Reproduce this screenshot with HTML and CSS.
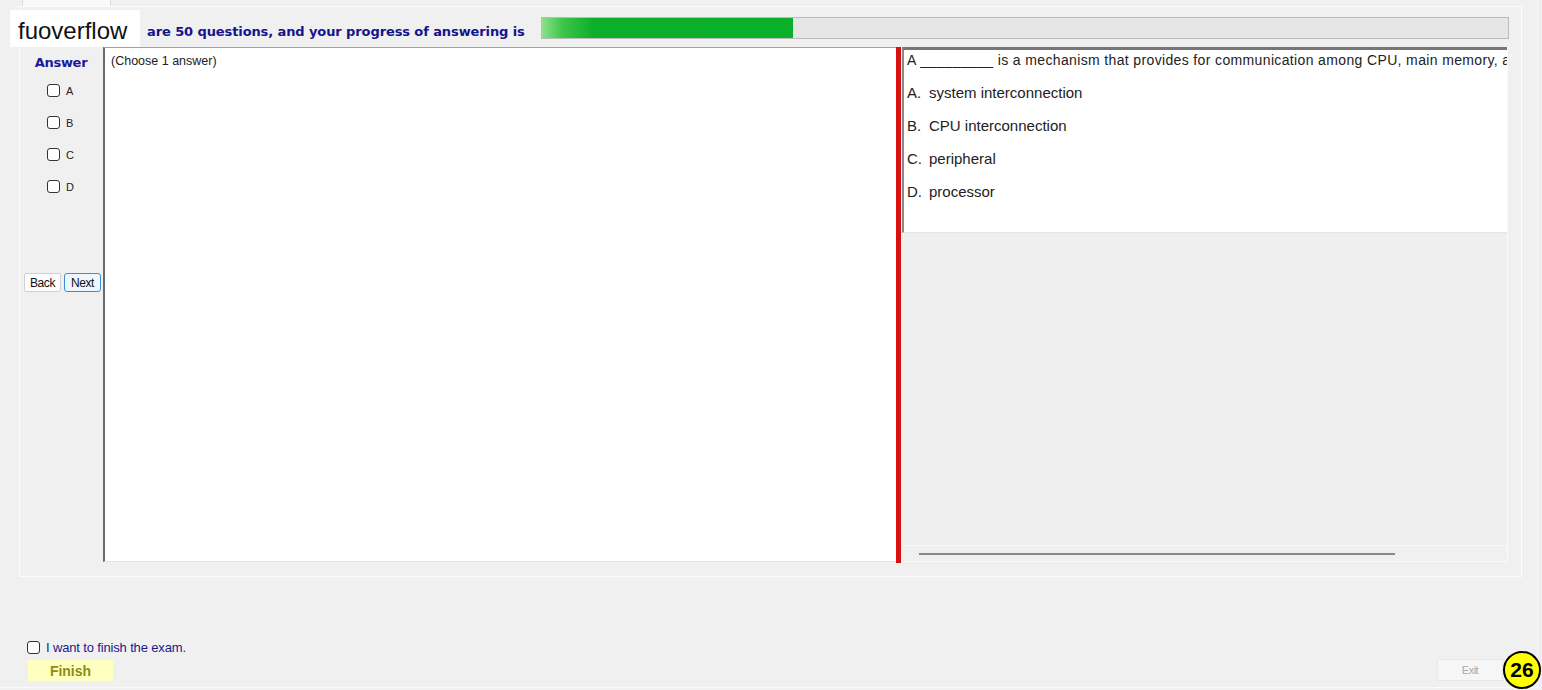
FILE: index.html
```html
<!DOCTYPE html>
<html lang="en">
<head>
    <meta charset="UTF-8">
    <title>Exam</title>
    <link rel="stylesheet" href="styles.css">
</head>
<body>
    <div class="app">
        <div class="tabs"><div class="tab"></div></div>

        <div class="group">
            <div class="header">
                <div class="progress-label">are 50 questions, and your progress of answering is</div>
                <div class="progress"><div class="progress-fill" style="width: 26%"></div></div>
            </div>

            <div class="main">
                <div class="answer-col">
                    <div class="answer-title">Answer</div>
                    <div class="choices">
                        <label class="choice"><input type="checkbox"> A</label>
                        <label class="choice"><input type="checkbox"> B</label>
                        <label class="choice"><input type="checkbox"> C</label>
                        <label class="choice"><input type="checkbox"> D</label>
                    </div>
                    <div class="nav-buttons">
                        <button class="btn">Back</button>
                        <button class="btn btn-next">Next</button>
                    </div>
                </div>

                <div class="work-panel">(Choose 1 answer)</div>

                <div class="splitter"></div>

                <div class="question-panel">
                    <div class="question-box">
                        <p class="question">A _________ is a mechanism that provides for communication among CPU, main memory, and I/O modules.</p>
                        <p class="option"><span class="opt-key">A.</span>system interconnection</p>
                        <p class="option"><span class="opt-key">B.</span>CPU interconnection</p>
                        <p class="option"><span class="opt-key">C.</span>peripheral</p>
                        <p class="option"><span class="opt-key">D.</span>processor</p>
                    </div>
                    <div class="question-rest"></div>
                    <div class="hscroll"><div class="hscroll-thumb"></div></div>
                </div>
            </div>
        </div>

        <div class="footer">
            <div class="finish-block">
                <label class="finish-check"><input type="checkbox"> I want to finish the exam.</label>
                <button class="btn-finish">Finish</button>
            </div>
            <button class="btn-exit">Exit</button>
        </div>
    </div>

    <div class="watermark">fuoverflow</div>
    <div class="badge">26</div>
</body>
</html>
```

FILE: styles.css
```css
body {
    margin: 0;
    padding: 0;
    background-color: #f0f0f0;
    font-family: "Liberation Sans", Arial, sans-serif;
    color: #222;
}

.app {
    width: 1537px;
    height: 687px;
    border-right: 1px solid #fafafa;
    border-bottom: 1px solid #fafafa;
    position: relative;
}

.tabs {
    height: 6px;
    padding-left: 22px;
}

.tab {
    width: 87px;
    height: 6px;
    background-color: #f9f9f9;
    border-left: 1px solid #dcdcdc;
    border-right: 1px solid #dcdcdc;
}

.group {
    margin-left: 19px;
    width: 1501px;
    height: 569px;
    border: 1px solid #fbfbfb;
}

.header {
    height: 40px;
    display: flex;
    align-items: flex-start;
    padding-left: 127px;
}

.progress-label {
    margin-top: 17px;
    line-height: 16px;
    font-family: "DejaVu Sans", Verdana, sans-serif;
    font-size: 13px;
    font-weight: bold;
    letter-spacing: -0.1px;
    color: #14148c;
}

.progress {
    margin-left: auto;
    margin-right: 12px;
    margin-top: 10px;
    width: 966px;
    height: 20px;
    background-color: #e6e6e6;
    border: 1px solid #bcbcbc;
}

.progress-fill {
    height: 100%;
    background: linear-gradient(to right, #8ee08e 0%, #3ec64a 8%, #0db02b 20%, #0bb02a 100%);
}

.main {
    height: 515px;
    display: flex;
    padding-left: 4px;
}

.answer-col {
    width: 79px;
    display: flex;
    flex-direction: column;
}

.answer-title {
    margin-top: 8px;
    line-height: 16px;
    font-family: "DejaVu Sans", Verdana, sans-serif;
    font-size: 13px;
    font-weight: bold;
    letter-spacing: -0.3px;
    color: #1a1aa0;
    text-align: center;
    padding-right: 5px;
}

.choices {
    margin-top: 13px;
    padding-left: 23px;
    display: flex;
    flex-direction: column;
    gap: 19px;
}

.choice {
    display: flex;
    align-items: center;
    gap: 6px;
    height: 13px;
    font-size: 11px;
    color: #222;
}

input[type="checkbox"] {
    appearance: none;
    margin: 0;
    width: 13px;
    height: 13px;
    border: 1px solid #333;
    border-radius: 3px;
    background-color: #fff;
    flex: none;
}

.nav-buttons {
    margin-top: 80px;
    display: flex;
    gap: 3px;
}

.btn {
    width: 37px;
    height: 19px;
    padding: 0;
    font-family: "Liberation Sans", Arial, sans-serif;
    font-size: 12px;
    letter-spacing: -0.4px;
    color: #111;
    background-color: #fdfdfd;
    border: 1px solid #d0d0d0;
    border-radius: 2px;
}

.btn-next {
    border-color: #3d8fd0;
    border-radius: 3px;
    background-color: #eef7fd;
}

.work-panel {
    width: 785px;
    background-color: #fff;
    border-left: 2px solid #6b6b6b;
    border-top: 1px solid #a0a0a0;
    border-bottom: 1px solid #e3e3e3;
    padding: 6px 0 0 6px;
    font-size: 12.5px;
    line-height: 14px;
    height: 507px;
}

.splitter {
    width: 5px;
    height: 516px;
    background-color: #d81010;
    border-right: 1px solid #f4f4f4;
}

.question-panel {
    width: 605px;
    display: flex;
    flex-direction: column;
    border-right: 1px solid #fafafa;
}

.question-box {
    height: 180px;
    background-color: #fff;
    border-top: 3px solid #767676;
    border-left: 2px solid #8a8a8a;
    border-bottom: 1px solid #e4e4e4;
    padding: 2px 0 0 3px;
    overflow: hidden;
    line-height: 16px;
}

.question-box p {
    margin: 0;
    white-space: nowrap;
}

.question {
    font-size: 14px;
    letter-spacing: 0.36px;
}

.option {
    margin-top: 17px !important;
    font-size: 15px;
}

.opt-key {
    display: inline-block;
    width: 22px;
}

.question-rest {
    flex: 1;
    background-color: #efefef;
}

.hscroll {
    height: 17px;
    border-top: 1px solid #fafafa;
    border-bottom: 1px solid #fafafa;
    padding: 7px 0 0 17px;
    box-sizing: border-box;
}

.hscroll-thumb {
    width: 476px;
    height: 2px;
    background-color: #888;
}

.footer {
    height: 110px;
    display: flex;
    justify-content: space-between;
    align-items: flex-end;
    padding: 0 34px 6px 27px;
    box-sizing: border-box;
}

.finish-block {
    display: flex;
    flex-direction: column;
    gap: 5px;
}

.finish-check {
    display: flex;
    align-items: center;
    gap: 6px;
    height: 16px;
    font-size: 13px;
    letter-spacing: -0.15px;
    color: #1a1a8c;
}

.btn-finish {
    margin-left: 1px;
    width: 85px;
    height: 21px;
    padding: 0;
    background-color: #ffffc0;
    border: none;
    font-family: "Liberation Sans", Arial, sans-serif;
    font-size: 14px;
    font-weight: bold;
    color: #8c8c14;
}

.btn-exit {
    width: 66px;
    height: 22px;
    padding: 0;
    background-color: #f6f6f6;
    border: 1px solid #e8e8e8;
    font-family: "Liberation Sans", Arial, sans-serif;
    font-size: 11px;
    color: #a8a8a8;
    letter-spacing: -0.5px;
}

.watermark {
    position: absolute;
    left: 10px;
    top: 10px;
    width: 122px;
    height: 37px;
    padding-left: 8px;
    background-color: #fff;
    font-size: 24px;
    line-height: 42px;
    color: #111;
}

.badge {
    position: absolute;
    left: 1503px;
    top: 651px;
    width: 34px;
    height: 34px;
    border: 2px solid #000;
    border-radius: 50%;
    background-color: #ffff00;
    font-size: 21px;
    font-weight: bold;
    line-height: 34px;
    text-align: center;
    color: #000;
}
```
